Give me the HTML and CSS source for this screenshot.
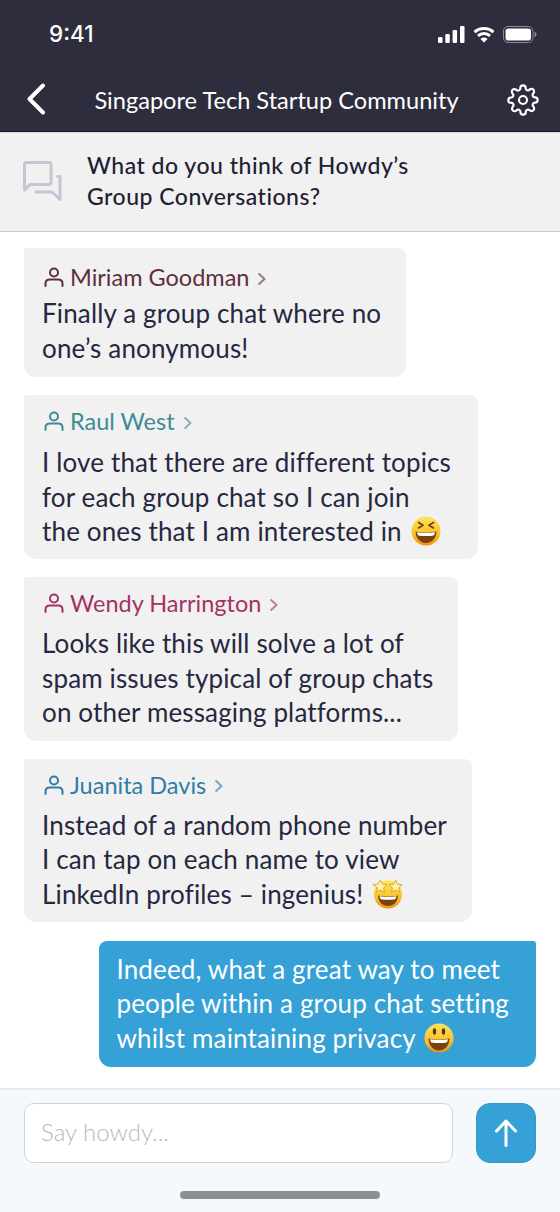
FILE: index.html
```html
<!DOCTYPE html>
<html lang="en">
<head>
  <meta charset="UTF-8">
  <meta name="viewport" content="width=device-width, initial-scale=1">
  <title>Singapore Tech Startup Community</title>
  <link rel="stylesheet" href="styles.css">
</head>
<body>
  <div class="phone">
    <header class="top">
      <div class="status">
        <span class="time">9:41</span>
        <div class="status-icons">
          <svg width="27" height="17" viewBox="0 0 27 17"><rect x="0" y="11" width="4.5" height="6" rx="1.2"/><rect x="7.3" y="8" width="4.5" height="9" rx="1.2"/><rect x="14.6" y="4" width="4.5" height="13" rx="1.2"/><rect x="22" y="0" width="4.5" height="17" rx="1.2"/></svg>
          <svg width="22" height="17" viewBox="0 0 22 17"><path class="wifi" d="M1.5 6.2C6.8 1.2 15.2 1.2 20.5 6.2"/><path class="wifi" d="M5 9.8c3.4-3 8.6-3 12 0"/><path d="M11 16.5 7.4 12.9c2.1-1.8 5.1-1.8 7.2 0z"/></svg>
          <svg width="34" height="17" viewBox="0 0 34 17"><rect class="batt" x="0.5" y="0.5" width="29.5" height="16" rx="4.5"/><rect x="2.5" y="2.5" width="25.5" height="12" rx="2.8"/><path class="batt-tip" d="M31.5 5.8c1.2.4 2 1.5 2 2.7s-.8 2.300-2 2.700z"/></svg>
        </div>
      </div>
      <nav class="nav">
        <svg class="back" width="20" height="32" viewBox="0 0 20 32"><path d="M17 2.500 3.500 16 17 29.500"/></svg>
        <h1 class="nav-title">Singapore Tech Startup Community</h1>
        <svg class="gear" width="32" height="34" viewBox="0 0 24 24"><circle cx="12" cy="12" r="3"/><path d="M19.400 15a1.650 1.650 0 0 0 .33 1.820l.06.06a2 2 0 1 1-2.830 2.830l-.06-.06a1.650 1.650 0 0 0-2.820 1.170V21a2 2 0 1 1-4 0v-.09a1.650 1.650 0 0 0-2.830-1.150l-.06.06a2 2 0 1 1-2.830-2.830l.06-.06a1.650 1.650 0 0 0-1.170-2.820H3a2 2 0 1 1 0-4h.09a1.650 1.650 0 0 0 1.150-2.830l-.06-.06a2 2 0 1 1 2.830-2.830l.06.06a1.650 1.650 0 0 0 1.820.33H9a1.650 1.650 0 0 0 1-1.510V3a2 2 0 1 1 4 0v.09a1.650 1.650 0 0 0 2.820 1.170l.06-.06a2 2 0 1 1 2.830 2.830l-.06.06a1.650 1.650 0 0 0-.33 1.820V9a1.650 1.650 0 0 0 1.510 1H21a2 2 0 1 1 0 4h-.09a1.650 1.650 0 0 0-1.510 1z"/></svg>
      </nav>
    </header>

    <section class="topic">
      <svg class="topic-icon" width="40" height="40" viewBox="0 0 40 40"><path d="M1.500 29V3a1.500 1.500 0 0 1 1.500-1.500h23.500A1.500 1.500 0 0 1 28 3v19a1.500 1.500 0 0 1-1.500 1.500H7z"/><path d="M12 31h17l8 7.500V15.500h-3.500"/></svg>
      <h2 class="topic-title">What do you think of Howdy’s<br>Group Conversations?</h2>
    </section>

    <main class="chat">
      <div class="msg msg-miriam">
        <div class="name">
          <svg class="person" width="20" height="20" viewBox="0 0 20 20"><circle cx="10" cy="5.500" r="4"/><path d="M1.500 19v-2.500c0-2.500 2-4 4.500-4h8c2.500 0 4.500 1.500 4.500 4V19"/></svg>
          <span>Miriam Goodman</span>
          <svg class="chev" width="8" height="12" viewBox="0 0 8 12"><path d="M1.200 1 6.500 6l-5.300 5"/></svg>
        </div>
        <p>Finally a group chat where no<br>one’s anonymous!</p>
      </div>

      <div class="msg msg-raul">
        <div class="name">
          <svg class="person" width="20" height="20" viewBox="0 0 20 20"><circle cx="10" cy="5.500" r="4"/><path d="M1.500 19v-2.500c0-2.500 2-4 4.500-4h8c2.500 0 4.500 1.500 4.500 4V19"/></svg>
          <span>Raul West</span>
          <svg class="chev" width="8" height="12" viewBox="0 0 8 12"><path d="M1.200 1 6.500 6l-5.300 5"/></svg>
        </div>
        <p>I love that there are different topics<br>for each group chat so I can join<br>the ones that I am interested in
          <svg class="emoji" width="30" height="30" viewBox="0 0 30 30">
            <defs>
              <linearGradient id="faceFill" x1="0" y1="0" x2="0" y2="1">
                <stop offset="0" stop-color="#fde35a"/>
                <stop offset="0.6" stop-color="#f9c22e"/>
                <stop offset="1" stop-color="#f0920f"/>
              </linearGradient>
            </defs>
            <circle cx="15" cy="15" r="14.500" fill="url(#faceFill)"/>
            <path d="M4.500 15.500c6.500 1.500 14.500 1.500 21 0-.4 7.500-5.200 11.500-10.500 11.500S4.900 23 4.500 15.500z" fill="#7a4210"/>
            <path d="M6 16.200c5.500 1 12.500 1 18 0-.3 1.700-.8 2.800-1.300 3.300-4.200.8-11.200.8-15.400 0-.5-.5-1-1.600-1.300-3.300z" fill="#fff"/>
            <path class="eye" d="M7.500 6.500l4.500 2.700-4.500 2.700M22.500 6.500 18 9.200l4.500 2.700"/>
          </svg>
        </p>
      </div>

      <div class="msg msg-wendy">
        <div class="name">
          <svg class="person" width="20" height="20" viewBox="0 0 20 20"><circle cx="10" cy="5.500" r="4"/><path d="M1.500 19v-2.500c0-2.500 2-4 4.500-4h8c2.500 0 4.500 1.500 4.500 4V19"/></svg>
          <span>Wendy Harrington</span>
          <svg class="chev" width="8" height="12" viewBox="0 0 8 12"><path d="M1.200 1 6.500 6l-5.300 5"/></svg>
        </div>
        <p>Looks like this will solve a lot of<br>spam issues typical of group chats<br>on other messaging platforms...</p>
      </div>

      <div class="msg msg-juanita">
        <div class="name">
          <svg class="person" width="20" height="20" viewBox="0 0 20 20"><circle cx="10" cy="5.500" r="4"/><path d="M1.500 19v-2.500c0-2.500 2-4 4.500-4h8c2.500 0 4.500 1.500 4.500 4V19"/></svg>
          <span>Juanita Davis</span>
          <svg class="chev" width="8" height="12" viewBox="0 0 8 12"><path d="M1.200 1 6.500 6l-5.300 5"/></svg>
        </div>
        <p>Instead of a random phone number<br>I can tap on each name to view<br>LinkedIn profiles – ingenius!
          <svg class="emoji" width="32" height="30" viewBox="0 0 32 30">
            <circle cx="16" cy="15.500" r="14" fill="url(#faceFill)"/>
            <path d="M6 16.500c6 1.500 14 1.500 20 0-.4 7-5 10.500-10 10.500S6.400 23.500 6 16.500z" fill="#7a4210"/>
            <path d="M7.500 17.200c5 1 12 1 17 0-.3 1.500-.8 2.500-1.300 3-4 .8-10.400.8-14.400 0-.5-.5-1-1.500-1.300-3z" fill="#fff"/>
            <path class="star" d="M8.500 1l1.900 4.200 4.600.5-3.400 3.100 1 4.500-4.100-2.300-4 2.300 1-4.500L1 5.700l4.600-.5z"/>
            <path class="star" d="M23.500 1l1.900 4.200 4.600.5-3.400 3.100 1 4.500-4.100-2.300-4 2.300 1-4.500L17 5.700l4.600-.5z"/>
          </svg>
        </p>
      </div>

      <div class="msg msg-me">
        <p>Indeed, what a great way to meet<br>people within a group chat setting<br>whilst maintaining privacy
          <svg class="emoji" width="30" height="30" viewBox="0 0 30 30">
            <circle cx="15" cy="15" r="14.500" fill="url(#faceFill)"/>
            <path d="M4.500 15.500c6.500 1.500 14.500 1.500 21 0-.4 8-5.200 12-10.500 12S4.900 23.500 4.500 15.500z" fill="#7a4210"/>
            <path d="M6 16.200c5.500 1 12.500 1 18 0-.3 1.700-.8 2.800-1.300 3.300-4.200.8-11.200.8-15.400 0-.5-.5-1-1.600-1.300-3.300z" fill="#fff"/>
            <ellipse cx="10.500" cy="8.500" rx="1.700" ry="3.300" fill="#5b3410"/>
            <ellipse cx="19.500" cy="8.500" rx="1.700" ry="3.300" fill="#5b3410"/>
          </svg>
        </p>
      </div>
    </main>

    <footer class="composer">
      <div class="composer-row">
        <div class="field">Say howdy...</div>
        <button class="send" type="button">
          <svg width="24" height="30" viewBox="0 0 24 30"><path d="M12 27.500V3M2.500 13 12 3l9.500 10"/></svg>
        </button>
      </div>
      <div class="home-bar"></div>
    </footer>
  </div>
</body>
</html>
```

FILE: styles.css
```css
* {
  margin: 0;
  padding: 0;
  box-sizing: border-box;
}
body {
  font-family: 'Lato', sans-serif;
  background: #fff;
  color: #262740;
}
.phone {
  width: 560px;
  height: 1212px;
  display: flex;
  flex-direction: column;
  overflow: hidden;
}

/* Barra superior */
.top {
  height: 132px;
  background: #2e2d3d;
  color: #fff;
  border-bottom: 1px solid #1e1d2b;
}
.status {
  height: 70px;
  padding: 20px 23px 0 49px;
  display: flex;
  justify-content: space-between;
  align-items: flex-start;
}
.time {
  font-family: 'Inter', sans-serif;
  font-size: 22.5px;
  font-weight: 500;
  line-height: 28px;
}
.status-icons {
  display: flex;
  gap: 8px;
  padding-top: 6px;
  fill: #fff;
}
.status-icons .wifi {
  fill: none;
  stroke: #fff;
  stroke-width: 3;
}
.status-icons .batt {
  fill: none;
  stroke: #8b8a94;
  stroke-width: 1;
}
.status-icons .batt-tip {
  fill: #8b8a94;
}
.nav {
  height: 60px;
  padding: 0 21px 0 26px;
  display: flex;
  align-items: center;
  justify-content: space-between;
}
.back {
  fill: none;
  stroke: #fff;
  stroke-width: 4;
  stroke-linecap: round;
  stroke-linejoin: round;
  margin-top: -3px;
}
.nav-title {
  font-size: 23.6px;
  font-weight: 400;
}
.gear {
  fill: none;
  stroke: #fff;
  stroke-width: 1.600;
  stroke-linecap: round;
  stroke-linejoin: round;
}

/* Tema */
.topic {
  height: 100px;
  background: #f1f1f1;
  border-top: 1px solid #d5d5d8;
  border-bottom: 1px solid #cfcfd2;
  padding: 0 0 2px 23px;
  display: flex;
  align-items: center;
  gap: 24px;
}
.topic-icon {
  fill: none;
  stroke: #c6c6d3;
  stroke-width: 3;
  stroke-linejoin: round;
  flex: none;
}
.topic-title {
  font-size: 23px;
  font-weight: 500;
  line-height: 31px;
  letter-spacing: 0.5px;
  color: #1f2033;
}

/* Mensajes */
.chat {
  flex: 1;
  padding: 16px 24px 0;
  display: flex;
  flex-direction: column;
  align-items: flex-start;
  gap: 18.25px;
}
.msg {
  background: #f1f1f1;
  border-radius: 3px 8px 12px 12px;
  padding: 11px 25px 11px 18px;
}
.msg p {
  font-size: 26px;
  font-weight: 400;
  line-height: 34.5px;
  letter-spacing: 0.15px;
  white-space: nowrap;
}
.name {
  display: flex;
  align-items: center;
  gap: 6px;
  font-size: 23.5px;
  line-height: 30px;
  margin-bottom: 8px;
  padding-left: 2px;
}
.person {
  fill: none;
  stroke: currentColor;
  stroke-width: 2;
  stroke-linecap: round;
}
.chev {
  fill: none;
  stroke: currentColor;
  stroke-width: 2;
  stroke-linecap: round;
  stroke-linejoin: round;
  opacity: 0.6;
  margin: 3px 0 0 3px;
}
.msg-miriam {
  padding: 14px 25px 12px 18px;
}
.msg-miriam .name {
  color: #5f2f3d;
  margin-bottom: 4px;
}
.msg-raul {
  padding: 11px 27px 10px 18px;
}
.msg-raul .name {
  color: #3f8b94;
  margin-bottom: 9px;
}
.msg-wendy .name {
  color: #a43363;
}
.msg-juanita .name {
  color: #2e7da7;
}
.msg-me {
  align-self: flex-end;
  background: #36a1d6;
  color: #fff;
  border-radius: 8px 3px 12px 12px;
  padding: 11px 27px 12px 17px;
}
.emoji {
  vertical-align: -5px;
  margin-left: 2px;
}
.eye {
  fill: none;
  stroke: #7a3a10;
  stroke-width: 1.800;
  stroke-linecap: round;
  stroke-linejoin: round;
}
.star {
  fill: #fff2b0;
  stroke: #e4a826;
  stroke-width: 1;
  stroke-linejoin: round;
}

/* Caja de texto */
.composer {
  height: 124px;
  background: #f5f9fc;
  border-top: 2px solid #e2e8ed;
  padding: 13px 24px 0;
}
.composer-row {
  display: flex;
  justify-content: space-between;
}
.field {
  width: 429px;
  height: 60px;
  background: #fff;
  border: 1px solid #cdd6df;
  border-radius: 10px;
  padding-left: 16px;
  font-size: 24px;
  font-weight: 300;
  line-height: 56px;
  color: #b9b9bf;
}
.send {
  width: 60px;
  height: 60px;
  background: #36a1d6;
  border: 1px solid #3498cb;
  border-radius: 14px;
  display: flex;
  align-items: center;
  justify-content: center;
}
.send svg {
  fill: none;
  stroke: #fff;
  stroke-width: 3;
  stroke-linecap: round;
  stroke-linejoin: round;
}
.home-bar {
  width: 200px;
  height: 8px;
  background: #8b8d92;
  border-radius: 4px;
  margin: 28px auto 0;
}
```
